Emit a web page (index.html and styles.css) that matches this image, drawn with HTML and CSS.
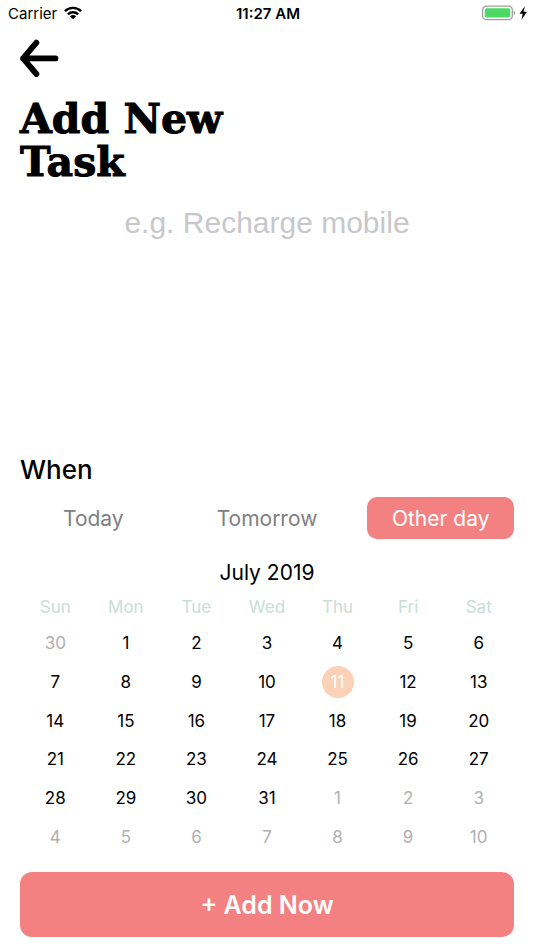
FILE: index.html
```html
<!DOCTYPE html>
<html lang="en">
<head>
<meta charset="utf-8">
<meta name="viewport" content="width=device-width, initial-scale=1">
<title>Add New Task</title>
<link rel="stylesheet" href="styles.css">
</head>
<body>
<div class="status-bar">
  <div class="carrier">
    <span>Carrier</span>
    <svg width="18" height="14" viewBox="0 0 18 14" aria-hidden="true">
      <g fill="none" stroke="#000" stroke-width="2.4">
        <path d="M0.9 5.2C5.4 0.7 12.6 0.7 17.1 5.2"/>
        <path d="M3.9 8.3C6.7 5.5 11.3 5.5 14.1 8.3"/>
      </g>
      <path d="M5.9 10.2C7.7 8.5 10.3 8.5 12.1 10.2L9 13.3Z"/>
    </svg>
  </div>
  <span class="clock">11:27 AM</span>
  <div class="power">
    <svg width="46" height="16" viewBox="0 0 46 16" aria-hidden="true">
      <rect x="0.7" y="1.2" width="29.6" height="13.4" rx="3.5" fill="#fff" stroke="#a0a0a0" stroke-width="1.3"/>
      <rect x="2.8" y="3.2" width="25.4" height="9.4" rx="1.8" fill="#4cd964"/>
      <path d="M31.7 5.7C33.7 6.3 33.7 9.5 31.7 10.1Z" fill="#a0a0a0"/>
      <path d="M42.8 1.3L37.5 8.8H40.7L39.5 14.7L45 6.8H41.6Z"/>
    </svg>
  </div>
</div>
<main class="screen">
  <button class="back" type="button" aria-label="Back">
    <svg width="40" height="40" viewBox="0 0 40 40" aria-hidden="true">
      <path d="M16.4 4.6L3.1 20.4L16.4 36M3.1 20.4H35.5" fill="none" stroke="#000" stroke-width="5.8" stroke-linecap="round" stroke-linejoin="round"/>
    </svg>
  </button>
  <h1 class="title">Add New<br>Task</h1>
  <input class="task" type="text" aria-label="Task" placeholder="e.g. Recharge mobile">
  <section class="when">
    <h2 class="heading">When</h2>
    <div class="options">
      <button class="option" type="button">Today</button>
      <button class="option" type="button">Tomorrow</button>
      <button class="option selected" type="button" aria-pressed="true">Other day</button>
    </div>
    <table class="calendar">
      <caption>July 2019</caption>
      <thead>
        <tr><th>Sun</th><th>Mon</th><th>Tue</th><th>Wed</th><th>Thu</th><th>Fri</th><th>Sat</th></tr>
      </thead>
      <tbody>
        <tr><td><button class="day other">30</button></td><td><button class="day">1</button></td><td><button class="day">2</button></td><td><button class="day">3</button></td><td><button class="day">4</button></td><td><button class="day">5</button></td><td><button class="day">6</button></td></tr>
        <tr><td><button class="day">7</button></td><td><button class="day">8</button></td><td><button class="day">9</button></td><td><button class="day">10</button></td><td><button class="day current">11</button></td><td><button class="day">12</button></td><td><button class="day">13</button></td></tr>
        <tr><td><button class="day">14</button></td><td><button class="day">15</button></td><td><button class="day">16</button></td><td><button class="day">17</button></td><td><button class="day">18</button></td><td><button class="day">19</button></td><td><button class="day">20</button></td></tr>
        <tr><td><button class="day">21</button></td><td><button class="day">22</button></td><td><button class="day">23</button></td><td><button class="day">24</button></td><td><button class="day">25</button></td><td><button class="day">26</button></td><td><button class="day">27</button></td></tr>
        <tr><td><button class="day">28</button></td><td><button class="day">29</button></td><td><button class="day">30</button></td><td><button class="day">31</button></td><td><button class="day other">1</button></td><td><button class="day other">2</button></td><td><button class="day other">3</button></td></tr>
        <tr><td><button class="day other">4</button></td><td><button class="day other">5</button></td><td><button class="day other">6</button></td><td><button class="day other">7</button></td><td><button class="day other">8</button></td><td><button class="day other">9</button></td><td><button class="day other">10</button></td></tr>
      </tbody>
    </table>
  </section>
  <button class="add" type="button">+ Add Now</button>
</main>
</body>
</html>
```
FILE: styles.css
```css
* {
  box-sizing: border-box;
}

body {
  margin: 0;
  min-height: 100vh;
  display: flex;
  flex-direction: column;
  background: #fff;
  color: #000;
  font-family: Inter, Roboto, sans-serif;
}

button {
  margin: 0;
  padding: 0;
  border: 0;
  background: none;
  color: inherit;
  font: inherit;
}

svg {
  display: block;
}

.status-bar {
  display: grid;
  grid-template-columns: 1fr auto 1fr;
  align-items: center;
  height: 26px;
  padding: 0 6px 0 8px;
  font-size: 15px;
}

.carrier {
  display: flex;
  align-items: center;
  gap: 7px;
}

.clock {
  font-weight: 600;
}

.power {
  justify-self: end;
}

.screen {
  flex: 1;
  display: flex;
  flex-direction: column;
  padding: 12px 20px 13px;
}

.back {
  align-self: flex-start;
}

.title {
  margin: 20px 0 0;
  font-family: Rockwell, "DejaVu Serif", serif;
  font-size: 41px;
  line-height: 43px;
  font-weight: 700;
  -webkit-text-stroke: 1px #000;
}

.task {
  width: 100%;
  margin: 19px 0 auto;
  padding: 0;
  border: 0;
  outline: 0;
  background: none;
  font-family: "Liberation Sans", sans-serif;
  font-size: 30px;
  line-height: 40px;
  text-align: center;
}

.task::placeholder {
  color: #c7c7cc;
  opacity: 1;
}

.heading {
  margin: 0 0 10px;
  font-size: 26px;
  line-height: 34px;
  font-weight: 500;
}

.options {
  display: grid;
  grid-template-columns: repeat(3, 1fr);
  gap: 27px;
}

.option {
  height: 42px;
  border-radius: 10px;
  color: #808080;
  font-size: 21px;
}

.option.selected {
  background: #f38181;
  color: #fff;
}

.calendar {
  width: 100%;
  margin-top: 18px;
  border-collapse: collapse;
  table-layout: fixed;
}

.calendar caption {
  font-size: 21px;
  line-height: 32px;
}

.calendar th {
  height: 35px;
  padding: 0;
  color: #c9ded7;
  font-size: 17px;
  font-weight: 400;
}

.calendar tbody {
  height: 232px;
}

.calendar td {
  padding: 0;
  text-align: center;
  vertical-align: middle;
}

.day {
  display: block;
  width: 32px;
  height: 32px;
  margin: 0 auto;
  border-radius: 50%;
  font-size: 17px;
}

.day.other {
  color: #b0b0b0;
}

.day.current {
  background: #fbd1b7;
  color: #fff;
}

.add {
  height: 65px;
  margin-top: 16px;
  border-radius: 12px;
  background: #f38181;
  color: #fff;
  font-size: 25px;
  font-weight: 600;
}
```
